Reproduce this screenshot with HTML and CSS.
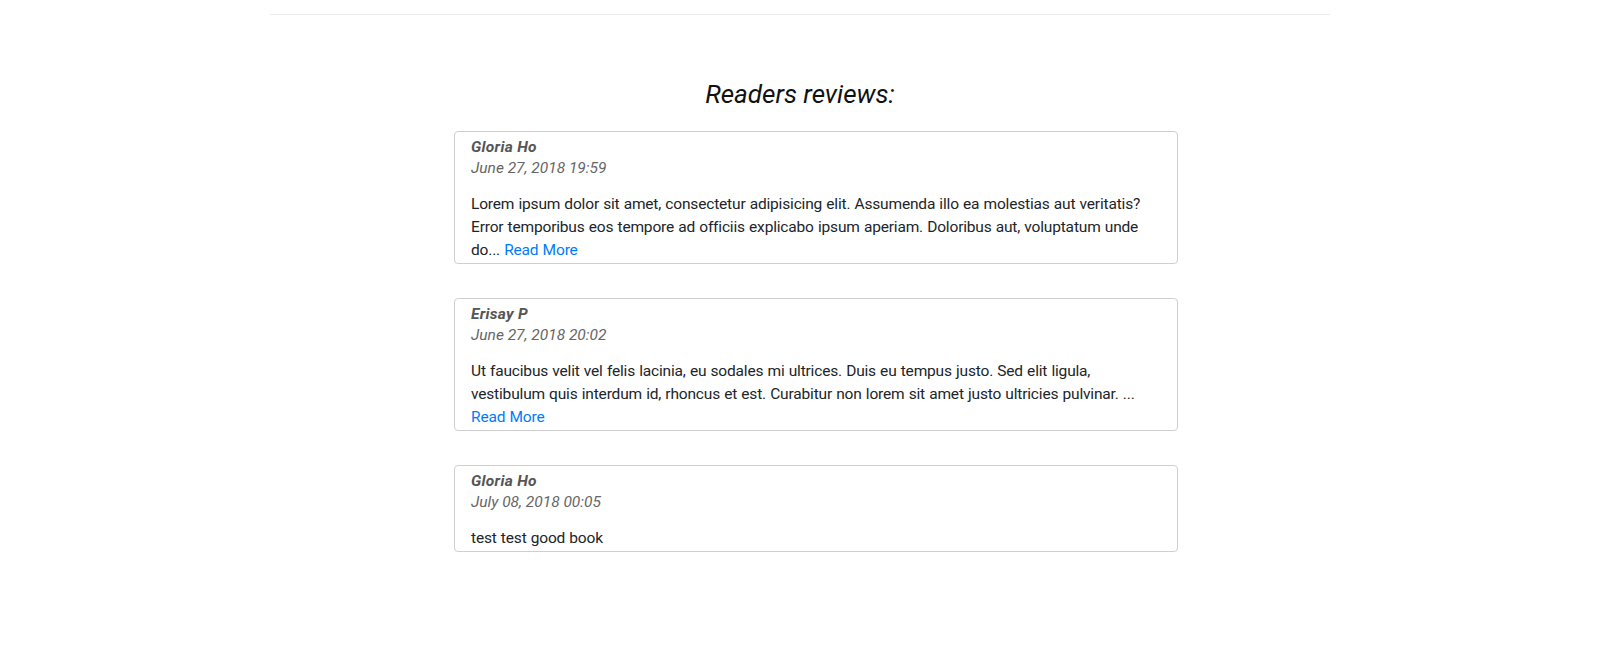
FILE: index.html
```html
<!DOCTYPE html>
<html lang="en">
<head>
<meta charset="utf-8">
<title>Readers reviews</title>
<link rel="stylesheet" href="styles.css">
</head>
<body>
<div class="page">
  <hr class="divider">
  <h2 class="title">Readers reviews:</h2>
  <div class="reviews">
    <div class="card">
      <div class="name">Gloria Ho</div>
      <div class="date">June 27, 2018 19:59</div>
      <p class="text">Lorem ipsum dolor sit amet, consectetur adipisicing elit. Assumenda illo ea molestias aut veritatis? Error temporibus eos tempore ad officiis explicabo ipsum aperiam. Doloribus aut, voluptatum unde do... <a href="#" class="more">Read More</a></p>
    </div>
    <div class="card">
      <div class="name">Erisay P</div>
      <div class="date">June 27, 2018 20:02</div>
      <p class="text">Ut faucibus velit vel felis lacinia, eu sodales mi ultrices. Duis eu tempus justo. Sed elit ligula, vestibulum quis interdum id, rhoncus et est. Curabitur non lorem sit amet justo ultricies pulvinar. ... <a href="#" class="more">Read More</a></p>
    </div>
    <div class="card">
      <div class="name">Gloria Ho</div>
      <div class="date">July 08, 2018 00:05</div>
      <p class="text">test test good book</p>
    </div>
  </div>
</div>
</body>
</html>
```

FILE: styles.css
```css
html, body {
  margin: 0;
  padding: 0;
  background: #fff;
}
body {
  font-family: Roboto, "Noto Sans", "Liberation Sans", sans-serif;
  color: #212529;
}
.page {
  width: 1060px;
  margin: 0 auto;
  padding-top: 14px;
}
.divider {
  margin: 0;
  border: 0;
  border-top: 1px solid #ebebeb;
}
.title {
  margin: 63px 0 0;
  text-align: center;
  font-size: 26px;
  line-height: 32px;
  font-style: italic;
  font-weight: 400;
  color: #111;
}
.reviews {
  width: 724px;
  margin: 21px 0 0 184px;
}
.card {
  border: 1px solid #cfcfcf;
  border-radius: 4px;
  padding: 5px 16px 1px;
  margin-bottom: 34px;
}
.name {
  font-size: 15.5px;
  line-height: 21px;
  font-style: italic;
  font-weight: 700;
  letter-spacing: 0.3px;
  color: #555;
}
.date {
  font-size: 15.5px;
  line-height: 21px;
  font-style: italic;
  color: #666;
  margin-bottom: 14px;
}
.text {
  margin: 0;
  font-size: 15.5px;
  letter-spacing: -0.17px;
  word-spacing: 0.5px;
  line-height: 23px;
}
.more {
  color: #007bff;
  text-decoration: none;
  white-space: nowrap;
}
```
